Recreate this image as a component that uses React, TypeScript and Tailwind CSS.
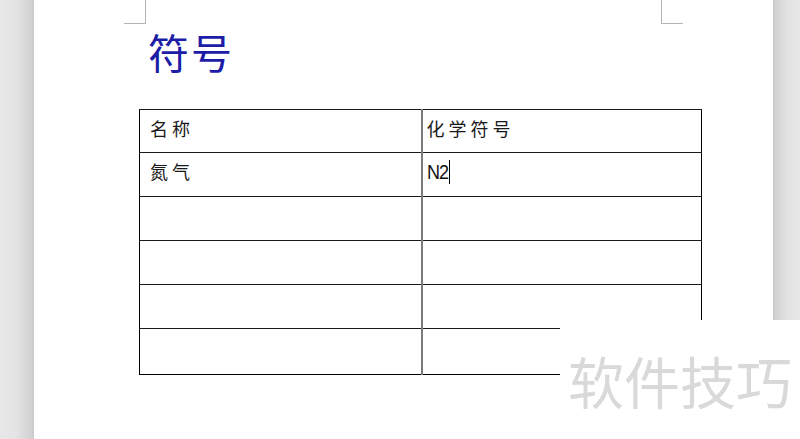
import React from 'react';

const rows = [
  ['名称', '化学符号'],
  ['氮气', 'N2'],
  ['', ''],
  ['', ''],
  ['', ''],
  ['', ''],
];

const heights = ['h-[43px]', 'h-[44px]', 'h-[44px]', 'h-[44px]', 'h-[44px]', 'h-[46px]'];

const App = () => {
  return (
    <div className="w-[800px] h-[439px] flex overflow-hidden bg-white relative" style={{ fontFamily: '"Noto Sans CJK SC", sans-serif' }}>
      {/* left gutter */}
      <div className="w-[34px] h-full bg-gradient-to-r from-[#e8e8e8] via-[#e4e4e4] to-[#cfcfcf] border-r border-[#c8c8c8]" />

      {/* page */}
      <div className="flex-1 h-full bg-white relative">
        {/* margin corner marks */}
        <div className="absolute left-[90px] top-0 w-[22px] h-[24px] border-r border-b border-[#b4b4b4]" />
        <div className="absolute left-[627px] top-0 w-[22px] h-[24px] border-l border-b border-[#b4b4b4]" />

        <div className="pl-[105px] pt-[31px]">
          <h1 className="text-[41px] leading-none text-[#1c1ca6] pl-[9px] tracking-[2px] font-normal">符号</h1>

          <table className="mt-[37px] w-[563px] border-collapse border border-black">
            <tbody>
              {rows.map((r, i) => (
                <tr key={i} className={heights[i]}>
                  <td className="w-[282px] border-t border-[#1a1a1a] border-r-2 border-r-[#7a7a7a] pl-[10px] align-top pt-[6px] text-[18px] tracking-[4px] text-[#1a1a1a] leading-[24px]">
                    {r[0]}
                  </td>
                  <td className="border-t border-[#1a1a1a] pl-[4px] align-top pt-[6px] text-[18px] tracking-[4px] text-[#1a1a1a] leading-[24px]">
                    {i === 1 ? (
                      <span className="inline-flex items-center pt-[1px]" style={{ fontFamily: '"Liberation Sans Narrow", "Liberation Sans", sans-serif' }}>
                        <span className="text-[20px] tracking-[-1px] leading-[24px] text-[#111] inline-block scale-x-90 origin-left">N2</span>
                        <span className="-ml-[1px] w-[1px] h-[24px] bg-black" />
                      </span>
                    ) : (
                      r[1]
                    )}
                  </td>
                </tr>
              ))}
            </tbody>
          </table>
        </div>
      </div>

      {/* right gutter */}
      <div className="w-[27px] h-full bg-gradient-to-r from-[#cfcfcf] via-[#e2e2e2] to-[#e8e8e8] border-l border-[#c8c8c8]" />

      {/* watermark */}
      <div className="absolute left-[560px] top-[320px] w-[240px] h-[119px] bg-white flex items-start pl-[8px] pt-[32px]">
        <span className="text-[56px] leading-none text-[#d9d9d9] tracking-[0px]">软件技巧</span>
      </div>
    </div>
  );
};

export default App;
